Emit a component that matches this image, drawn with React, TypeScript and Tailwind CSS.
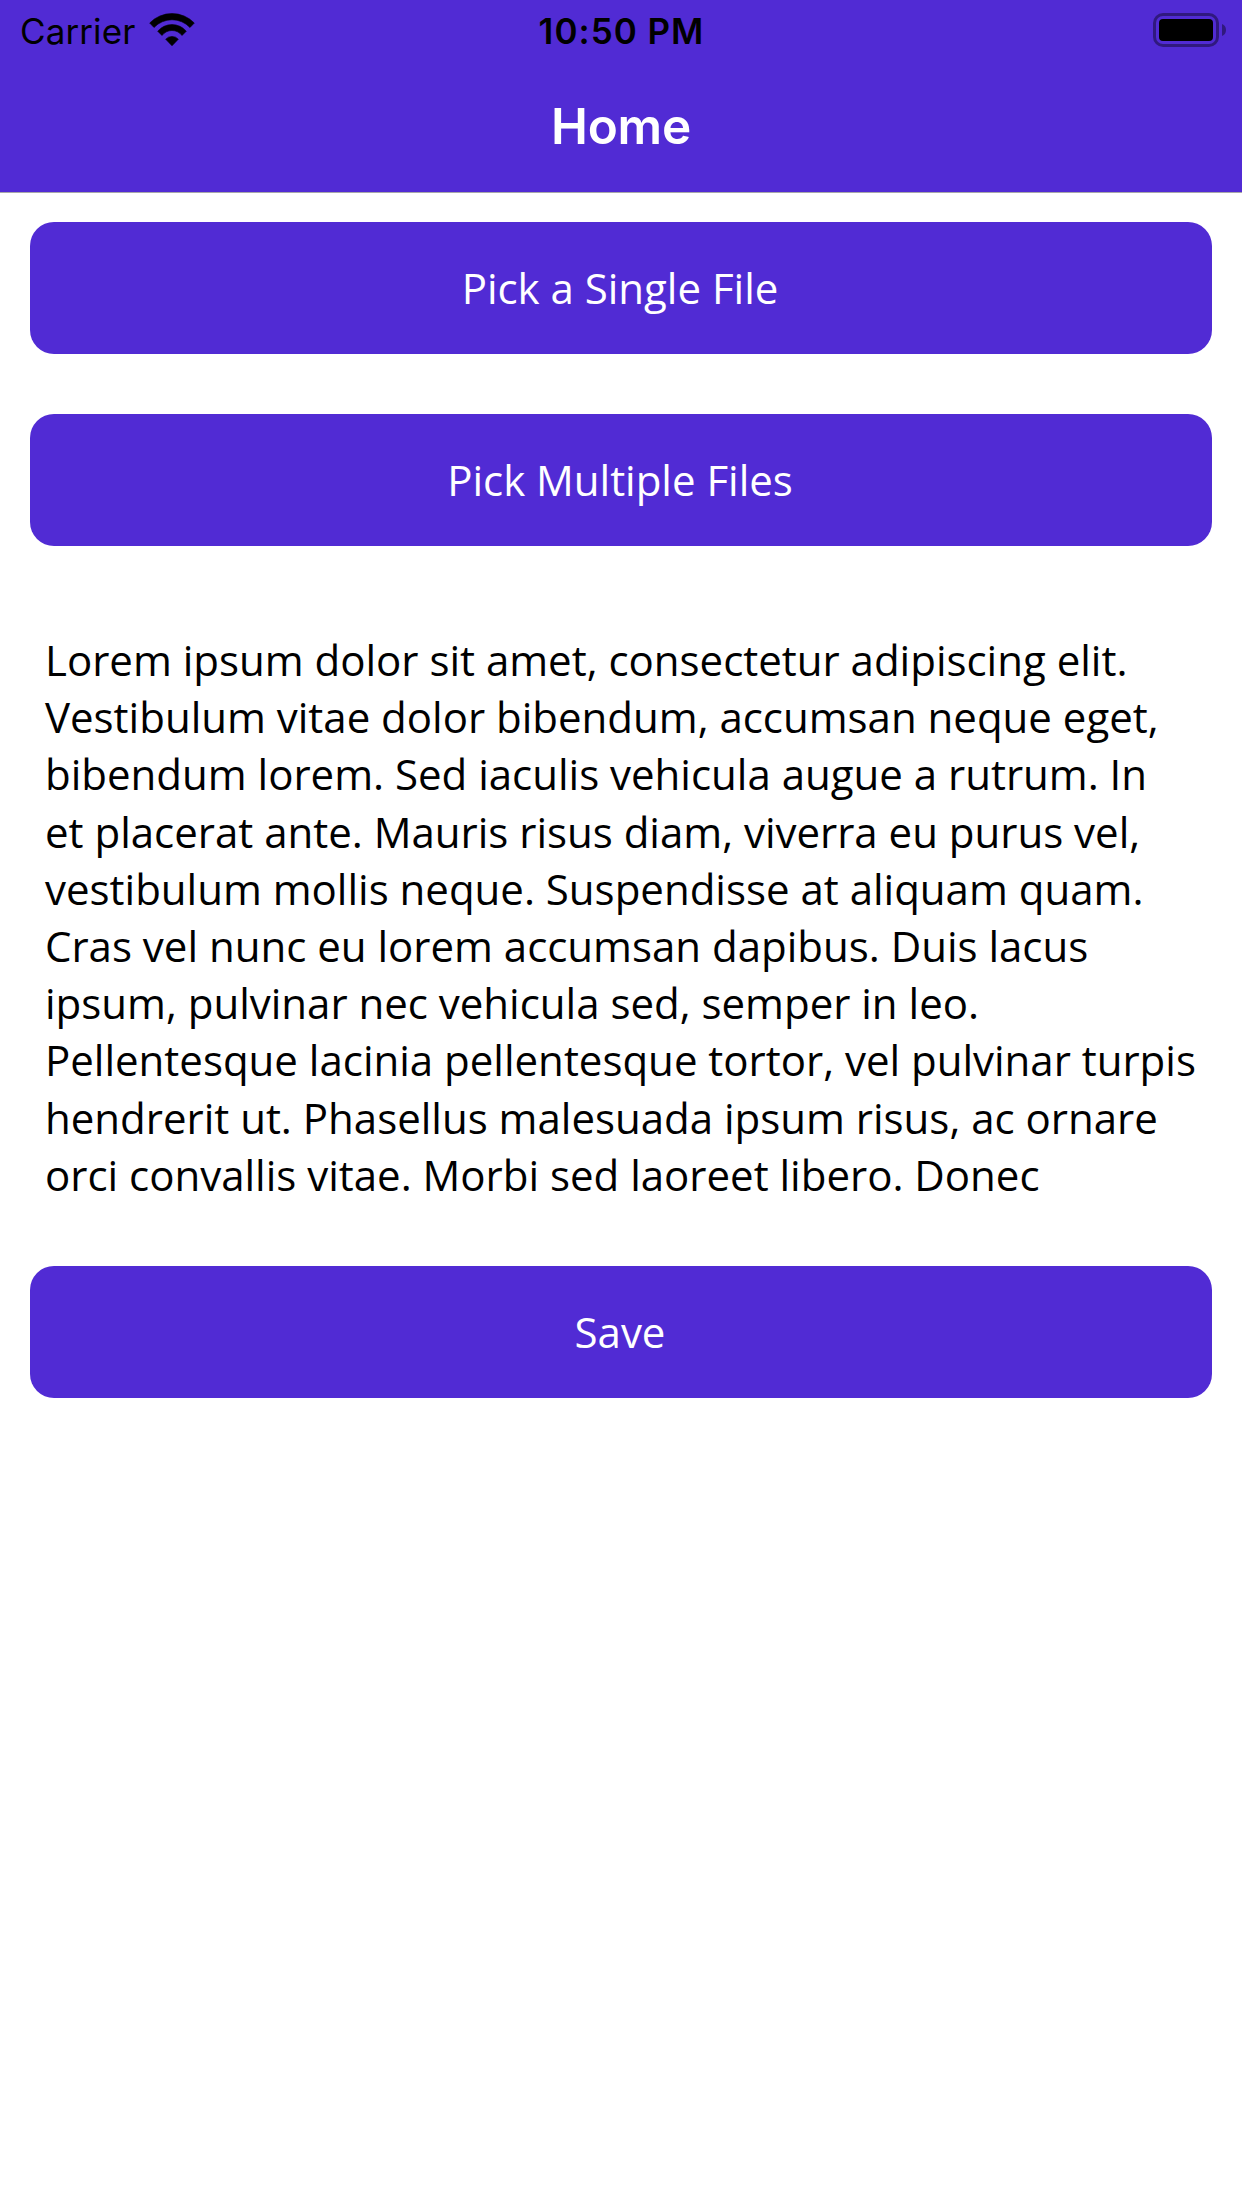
const lines = [
  "Lorem ipsum dolor sit amet, consectetur adipiscing elit.",
  "Vestibulum vitae dolor bibendum, accumsan neque eget,",
  "bibendum lorem. Sed iaculis vehicula augue a rutrum. In",
  "et placerat ante. Mauris risus diam, viverra eu purus vel,",
  "vestibulum mollis neque. Suspendisse at aliquam quam.",
  "Cras vel nunc eu lorem accumsan dapibus. Duis lacus",
  "ipsum, pulvinar nec vehicula sed, semper in leo.",
  "Pellentesque lacinia pellentesque tortor, vel pulvinar turpis",
  "hendrerit ut. Phasellus malesuada ipsum risus, ac ornare",
  "orci convallis vitae. Morbi sed laoreet libero. Donec",
];

function Button({ label }: { label: string }) {
  return (
    <button className="flex h-[132px] w-full items-center justify-center rounded-[24px] bg-[#512bd4] pr-[2px] pb-[1px] text-[42px] tracking-[-0.02px] text-white">
      {label}
    </button>
  );
}

function StatusBar() {
  return (
    <div className="grid h-[60px] grid-cols-3 items-center pr-[16px] pl-[20px] font-[Inter,sans-serif] text-black">
      <div className="flex items-center text-[35px]">
        <span className="w-[129px] pt-[2px] tracking-[0.1px]">Carrier</span>
        <svg width="46" height="34" viewBox="0 0 46 34" strokeLinejoin="round" stroke="black" strokeWidth="0.6">
          <path d="M0.700 10A31 31 0 0 1 45.300 10L41 14.500A24.800 24.800 0 0 0 5 14.500Z" />
          <path d="M8.700 18.200A18.700 18.700 0 0 1 37.300 18.200L33 22.500A12.500 12.500 0 0 0 13 22.500Z" />
          <path d="M16.700 26.200A8.500 8.500 0 0 1 29.300 26.200L23 32.800Z" />
        </svg>
      </div>
      <div className="pt-[2px] pr-[3px] text-center text-[35px] font-semibold tracking-[1px] whitespace-nowrap">10:50 PM</div>
      <svg className="justify-self-end" width="73" height="34" viewBox="0 0 73 34">
        <rect x="1.500" y="1.500" width="63" height="31" rx="8.500" fill="none" stroke="black" strokeOpacity=".4" strokeWidth="3" />
        <rect x="6" y="6" width="54" height="22" rx="4" />
        <path d="M69 11Q73 12.500 73 17T69 23Z" fillOpacity=".4" />
      </svg>
    </div>
  );
}

export default function App() {
  return (
    <div className="flex h-[2208px] w-[1242px] flex-col bg-white font-['Open_Sans',sans-serif]">
      <header className="h-[193px] border-b border-[#a7a7aa] bg-[#512bd4]">
        <StatusBar />
        <h1 className="flex h-[132px] items-center justify-center font-[Inter,sans-serif] text-[49.500px] font-semibold tracking-[-0.200px] text-white">Home</h1>
      </header>
      <main className="flex flex-col px-[30px] pt-[29px]">
        <Button label="Pick a Single File" />
        <div className="h-[60px]" />
        <Button label="Pick Multiple Files" />
        <div className="mt-[85px] mb-[63px] px-[15px] text-[42px] leading-[57.200px] tracking-[-0.005px] whitespace-nowrap text-black">
          {lines.map((line) => (
            <p key={line}>{line}</p>
          ))}
        </div>
        <Button label="Save" />
      </main>
    </div>
  );
}
